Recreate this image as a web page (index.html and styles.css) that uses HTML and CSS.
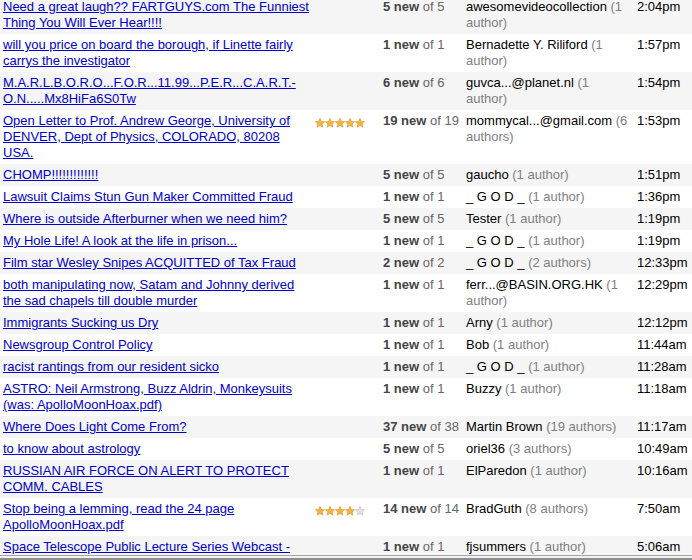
FILE: index.html
```html
<!DOCTYPE html>
<html>
<head>
<meta charset="utf-8">
<title>Topics</title>
<link rel="stylesheet" href="styles.css">
</head>
<body>
<svg width="0" height="0" class="defs" aria-hidden="true">
  <defs>
    <path id="starshape" d="M5 0.4 L6.3 3.5 L9.6 3.7 L7.1 5.9 L7.9 9.2 L5 7.4 L2.1 9.2 L2.9 5.9 L0.4 3.7 L3.7 3.5 Z"/>
  </defs>
</svg>
<div class="viewport">
<table class="topics">
  <colgroup>
    <col class="c-title"><col class="c-rate"><col class="c-count"><col class="c-author"><col class="c-time">
  </colgroup>
  <tbody>
    <tr class="alt">
      <td class="title"><a href="#">Need a great laugh?? FARTGUYS.com The Funniest Thing You Will Ever Hear!!!!</a></td>
      <td class="rate"></td>
      <td class="count"><b>5 new</b> of 5</td>
      <td class="author">awesomevideocollection <span class="n">(1 author)</span></td>
      <td class="time">2:04pm</td>
    </tr>
    <tr>
      <td class="title"><a href="#">will you price on board the borough, if Linette fairly carrys the investigator</a></td>
      <td class="rate"></td>
      <td class="count"><b>1 new</b> of 1</td>
      <td class="author">Bernadette Y. Riliford <span class="n">(1 author)</span></td>
      <td class="time">1:57pm</td>
    </tr>
    <tr class="alt">
      <td class="title"><a href="#">M.A.R.L.B.O.R.O...F.O.R...11.99...P.E.R...C.A.R.T.-O.N.....Mx8HiFa6S0Tw</a></td>
      <td class="rate"></td>
      <td class="count"><b>6 new</b> of 6</td>
      <td class="author">guvca...@planet.nl <span class="n">(1 author)</span></td>
      <td class="time">1:54pm</td>
    </tr>
    <tr>
      <td class="title"><a href="#">Open Letter to Prof. Andrew George, University of DENVER, Dept of Physics, COLORADO, 80208 USA.</a></td>
      <td class="rate"><span class="stars">
        <svg class="star on" viewBox="0 0 10 10"><use href="#starshape"/></svg><svg class="star on" viewBox="0 0 10 10"><use href="#starshape"/></svg><svg class="star on" viewBox="0 0 10 10"><use href="#starshape"/></svg><svg class="star on" viewBox="0 0 10 10"><use href="#starshape"/></svg><svg class="star on" viewBox="0 0 10 10"><use href="#starshape"/></svg>
      </span></td>
      <td class="count"><b>19 new</b> of 19</td>
      <td class="author">mommycal...@gmail.com <span class="n">(6 authors)</span></td>
      <td class="time">1:53pm</td>
    </tr>
    <tr class="alt">
      <td class="title"><a href="#">CHOMP!!!!!!!!!!!!!</a></td>
      <td class="rate"></td>
      <td class="count"><b>5 new</b> of 5</td>
      <td class="author">gaucho <span class="n">(1 author)</span></td>
      <td class="time">1:51pm</td>
    </tr>
    <tr>
      <td class="title"><a href="#">Lawsuit Claims Stun Gun Maker Committed Fraud</a></td>
      <td class="rate"></td>
      <td class="count"><b>1 new</b> of 1</td>
      <td class="author">_ G O D _ <span class="n">(1 author)</span></td>
      <td class="time">1:36pm</td>
    </tr>
    <tr class="alt">
      <td class="title"><a href="#">Where is outside Afterburner when we need him?</a></td>
      <td class="rate"></td>
      <td class="count"><b>5 new</b> of 5</td>
      <td class="author">Tester <span class="n">(1 author)</span></td>
      <td class="time">1:19pm</td>
    </tr>
    <tr>
      <td class="title"><a href="#">My Hole Life! A look at the life in prison...</a></td>
      <td class="rate"></td>
      <td class="count"><b>1 new</b> of 1</td>
      <td class="author">_ G O D _ <span class="n">(1 author)</span></td>
      <td class="time">1:19pm</td>
    </tr>
    <tr class="alt">
      <td class="title"><a href="#">Film star Wesley Snipes ACQUITTED of Tax Fraud</a></td>
      <td class="rate"></td>
      <td class="count"><b>2 new</b> of 2</td>
      <td class="author">_ G O D _ <span class="n">(2 authors)</span></td>
      <td class="time">12:33pm</td>
    </tr>
    <tr>
      <td class="title"><a href="#">both manipulating now, Satam and Johnny derived the sad chapels till double murder</a></td>
      <td class="rate"></td>
      <td class="count"><b>1 new</b> of 1</td>
      <td class="author">ferr...@BASIN.ORG.HK <span class="n">(1 author)</span></td>
      <td class="time">12:29pm</td>
    </tr>
    <tr class="alt">
      <td class="title"><a href="#">Immigrants Sucking us Dry</a></td>
      <td class="rate"></td>
      <td class="count"><b>1 new</b> of 1</td>
      <td class="author">Arny <span class="n">(1 author)</span></td>
      <td class="time">12:12pm</td>
    </tr>
    <tr>
      <td class="title"><a href="#">Newsgroup Control Policy</a></td>
      <td class="rate"></td>
      <td class="count"><b>1 new</b> of 1</td>
      <td class="author">Bob <span class="n">(1 author)</span></td>
      <td class="time">11:44am</td>
    </tr>
    <tr class="alt">
      <td class="title"><a href="#">racist rantings from our resident sicko</a></td>
      <td class="rate"></td>
      <td class="count"><b>1 new</b> of 1</td>
      <td class="author">_ G O D _ <span class="n">(1 author)</span></td>
      <td class="time">11:28am</td>
    </tr>
    <tr>
      <td class="title"><a href="#">ASTRO: Neil Armstrong, Buzz Aldrin, Monkeysuits (was: ApolloMoonHoax.pdf)</a></td>
      <td class="rate"></td>
      <td class="count"><b>1 new</b> of 1</td>
      <td class="author">Buzzy <span class="n">(1 author)</span></td>
      <td class="time">11:18am</td>
    </tr>
    <tr class="alt">
      <td class="title"><a href="#">Where Does Light Come From?</a></td>
      <td class="rate"></td>
      <td class="count"><b>37 new</b> of 38</td>
      <td class="author">Martin Brown <span class="n">(19 authors)</span></td>
      <td class="time">11:17am</td>
    </tr>
    <tr>
      <td class="title"><a href="#">to know about astrology</a></td>
      <td class="rate"></td>
      <td class="count"><b>5 new</b> of 5</td>
      <td class="author">oriel36 <span class="n">(3 authors)</span></td>
      <td class="time">10:49am</td>
    </tr>
    <tr class="alt">
      <td class="title"><a href="#">RUSSIAN AIR FORCE ON ALERT TO PROTECT COMM. CABLES</a></td>
      <td class="rate"></td>
      <td class="count"><b>1 new</b> of 1</td>
      <td class="author">ElParedon <span class="n">(1 author)</span></td>
      <td class="time">10:16am</td>
    </tr>
    <tr>
      <td class="title"><a href="#">Stop being a lemming, read the 24 page ApolloMoonHoax.pdf</a></td>
      <td class="rate"><span class="stars">
        <svg class="star on" viewBox="0 0 10 10"><use href="#starshape"/></svg><svg class="star on" viewBox="0 0 10 10"><use href="#starshape"/></svg><svg class="star on" viewBox="0 0 10 10"><use href="#starshape"/></svg><svg class="star on" viewBox="0 0 10 10"><use href="#starshape"/></svg><svg class="star off" viewBox="0 0 10 10"><use href="#starshape"/></svg>
      </span></td>
      <td class="count"><b>14 new</b> of 14</td>
      <td class="author">BradGuth <span class="n">(8 authors)</span></td>
      <td class="time">7:50am</td>
    </tr>
    <tr class="alt">
      <td class="title"><a href="#">Space Telescope Public Lecture Series Webcast - Hubble and Beyond</a></td>
      <td class="rate"></td>
      <td class="count"><b>1 new</b> of 1</td>
      <td class="author">fjsummers <span class="n">(1 author)</span></td>
      <td class="time">5:06am</td>
    </tr>
  </tbody>
</table>
</div>
<div class="edge"></div>
</body>
</html>
```

FILE: styles.css
```css
html, body {
  margin: 0;
  padding: 0;
  background: #fff;
}
body {
  font-family: "Liberation Sans", Arial, sans-serif;
  font-size: 13px;
  line-height: 16px;
  color: #000;
  height: 560px;
  overflow: hidden;
  display: flex;
  flex-direction: column;
}
.defs {
  position: absolute;
  width: 0;
  height: 0;
}
.viewport {
  height: 555px;
  overflow: hidden;
  flex: none;
}
.topics {
  margin-top: -4px;
  width: 692px;
  border-collapse: collapse;
  table-layout: fixed;
}
.c-title { width: 311px; }
.c-rate { width: 69px; }
.c-count { width: 83px; }
.c-author { width: 171px; }
.c-time { width: 58px; }

.topics td {
  padding: 3px 0 3px 3px;
  vertical-align: top;
}
.topics tr.alt td {
  background: #f5f5f5;
}
.title a {
  color: #0000cc;
  text-decoration: underline;
}
.topics td.rate {
  padding-left: 4px;
}
.stars {
  display: flex;
  margin-top: 5px;
}
.star {
  width: 10px;
  height: 10px;
  display: block;
}
.star.on {
  fill: #f7b53b;
  stroke: #d9902a;
  stroke-width: 0.6;
}
.star.off {
  fill: #e4e4e4;
  stroke: #b8b8b8;
  stroke-width: 0.6;
}
.count {
  color: #666;
  white-space: nowrap;
}
.count b {
  color: #444;
}
.topics td.author {
  padding-right: 3px;
}
.author .n {
  color: #808080;
}
.time {
  white-space: nowrap;
}
.edge {
  flex: none;
  height: 2px;
  border-top: 1px solid #a5a5a5;
  border-bottom: 2px solid #8e8e8e;
  background: #f2f2f2;
}
```
